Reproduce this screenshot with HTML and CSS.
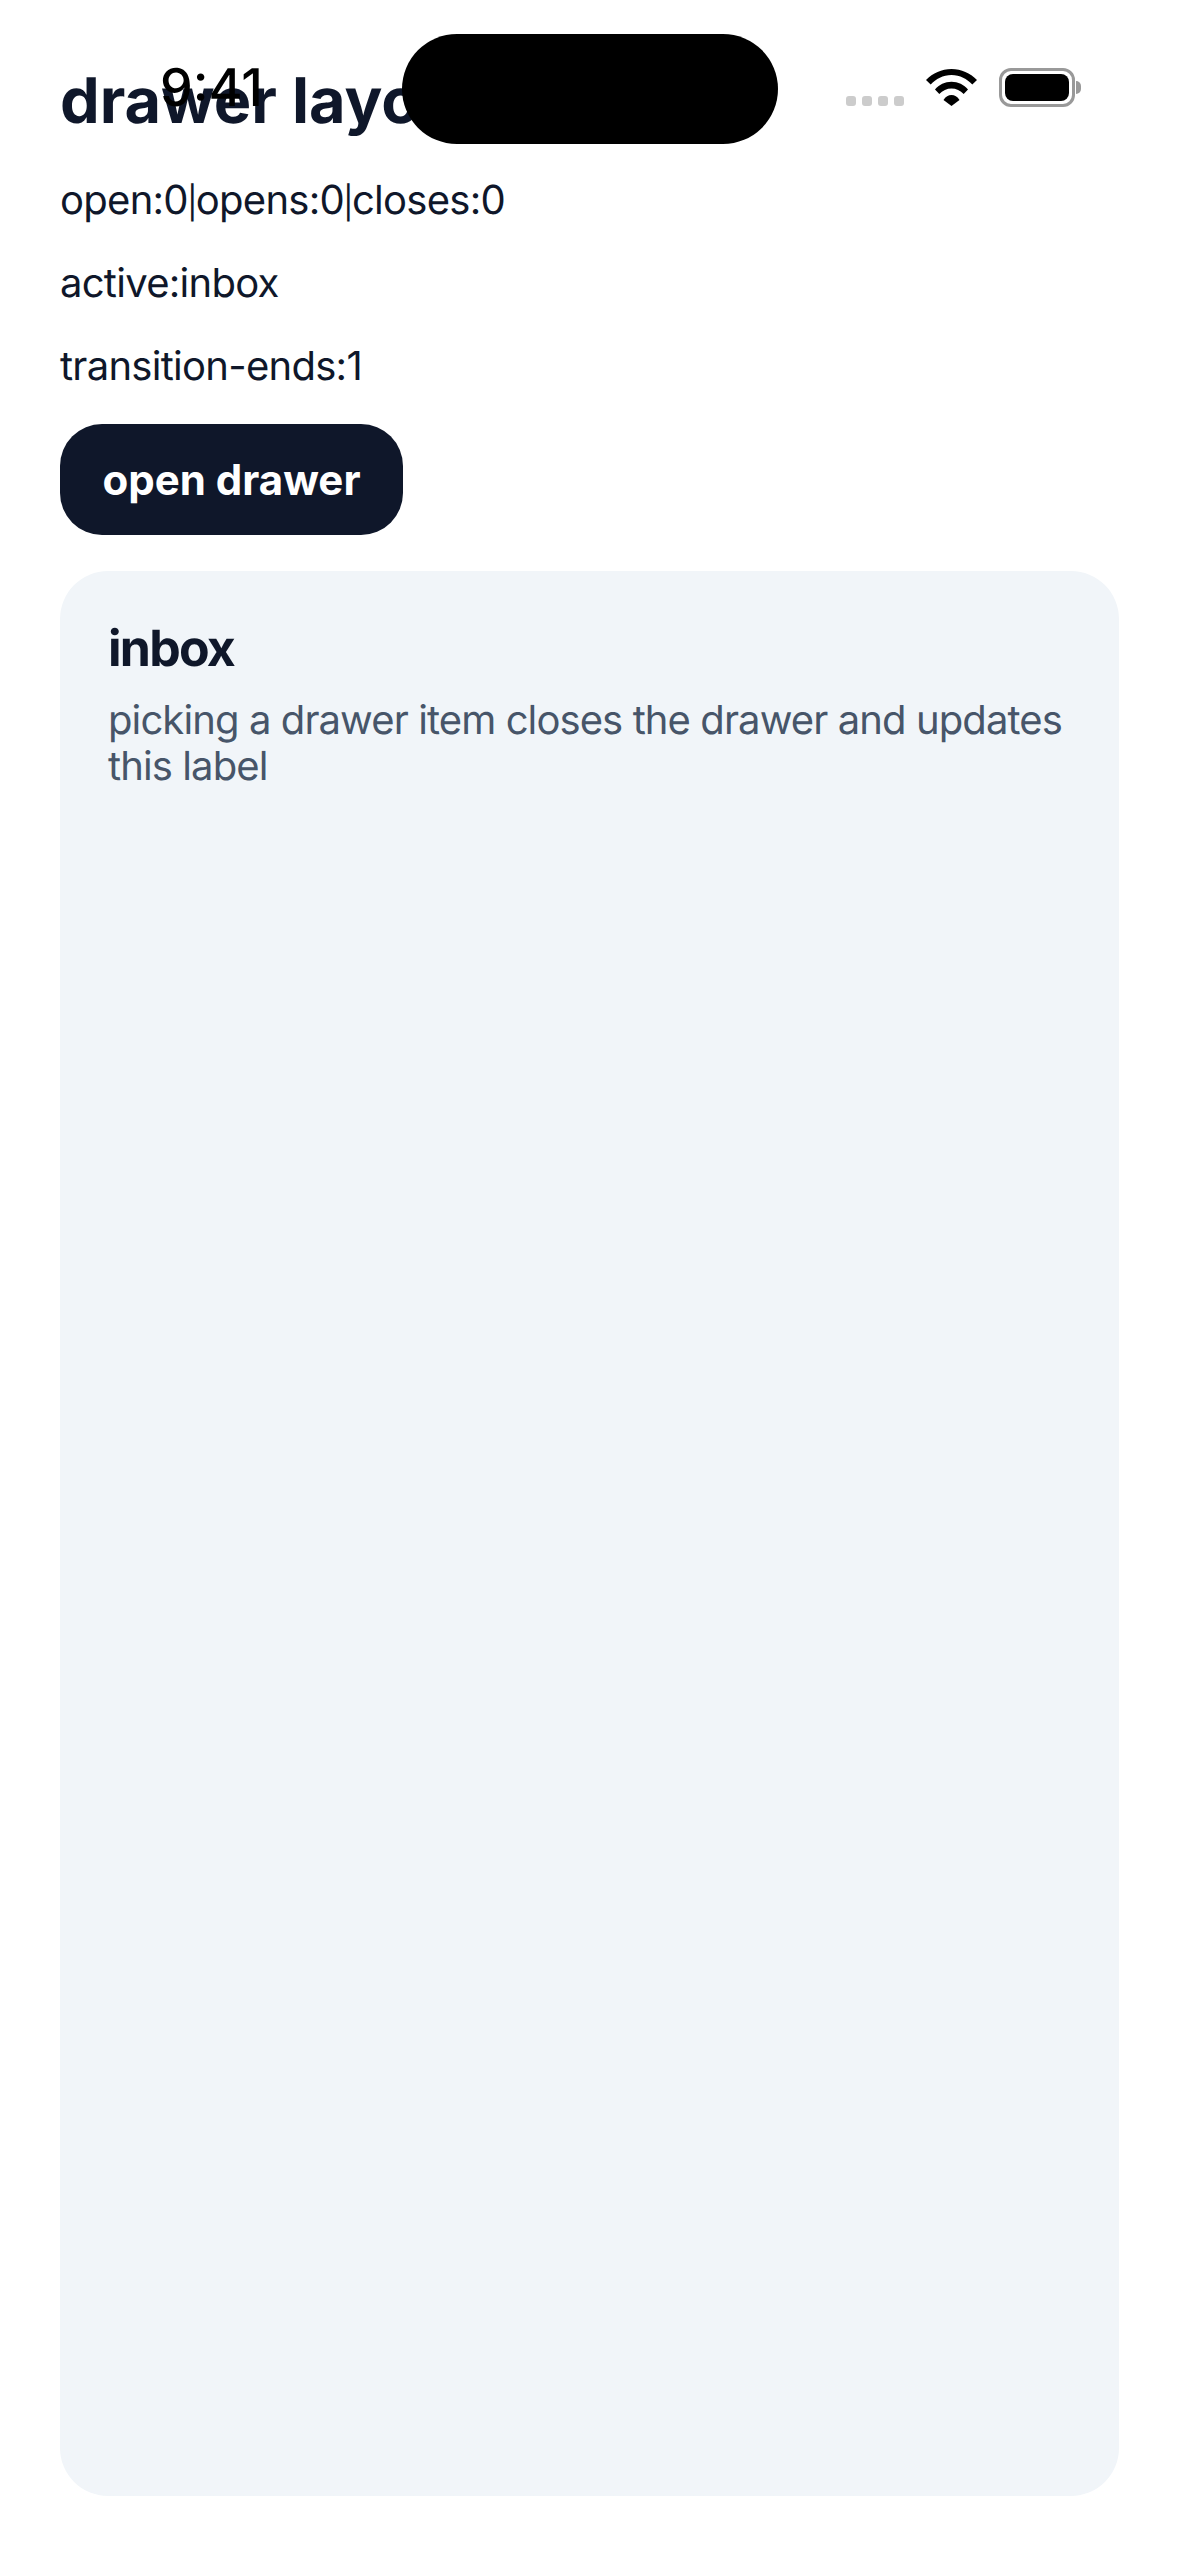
FILE: index.html
```html
<!DOCTYPE html>
<html lang="en">
<head>
    <meta charset="UTF-8">
    <meta name="viewport" content="width=device-width, initial-scale=1.0">
    <title>drawer layout</title>
    <link rel="stylesheet" href="styles.css">
</head>
<body>
    <div class="statusbar">
        <span class="time">9:41</span>
        <div class="island"></div>
        <div class="signal"><i></i><i></i><i></i><i></i></div>
        <svg class="wifi" viewBox="0 0 51 37" width="51" height="37">
            <path d="M0 11C7 4 15.500 0 25.500 0S44 4 51 11L46.300 15.500C41 10 34 6 25.500 6S10 10 4.700 15.500Z"/>
            <path d="M9 20.500C13 15.500 19 12.700 25.500 12.700S38 15.500 42 20.500L37.700 25C34.500 21.500 30 19.500 25.500 19.500S16.500 21.500 13.300 25Z"/>
            <path d="M17.500 31C19.500 27.500 22.500 26 25.500 26S31.500 27.500 33.500 31L25.500 37Z"/>
        </svg>
        <div class="battery"><div class="battery-level"></div></div>
        <div class="battery-nub"></div>
    </div>
    <div class="page">
        <h1>drawer layout</h1>
        <p class="stat">open:0<span class="sep">|</span>opens:0<span class="sep">|</span>closes:0</p>
        <p class="stat">active:inbox</p>
        <p class="stat">transition-ends:1</p>
        <button type="button" class="open-btn">open drawer</button>
        <section class="panel">
            <h2>inbox</h2>
            <p>picking a drawer item closes the drawer and updates this label</p>
        </section>
    </div>
</body>
</html>
```

FILE: styles.css
```css
html, body {
    margin: 0;
    padding: 0;
}
body {
    position: relative;
    width: 1179px;
    height: 2556px;
    background-color: #fff;
    font-family: Inter, "Noto Sans", sans-serif;
    color: #0f172a;
    overflow: hidden;
    text-rendering: geometricPrecision;
}
.statusbar {
    position: absolute;
    top: 0;
    left: 0;
    width: 1179px;
    height: 170px;
}
.time {
    position: absolute;
    left: 160px;
    top: 58px;
    font-size: 52px;
    line-height: 60px;
    font-weight: 500;
    color: #000;
}
.island {
    position: absolute;
    left: 402px;
    top: 34px;
    width: 376px;
    height: 110px;
    border-radius: 55px;
    background-color: #000;
}
.signal {
    position: absolute;
    left: 846px;
    top: 96px;
    display: flex;
    gap: 6px;
}
.signal i {
    width: 10px;
    height: 10px;
    border-radius: 3px;
    background-color: #ccc;
}
.wifi {
    position: absolute;
    left: 926px;
    top: 69px;
}
.battery {
    position: absolute;
    left: 999px;
    top: 68px;
    width: 76px;
    height: 39px;
    box-sizing: border-box;
    padding: 3px;
    border: 3px solid #999;
    border-radius: 12px;
}
.battery-level {
    height: 100%;
    border-radius: 8px;
    background-color: #000;
}
.battery-nub {
    position: absolute;
    left: 1076px;
    top: 81px;
    width: 5px;
    height: 13px;
    border-radius: 0 6px 6px 0;
    background-color: #999;
}
.page {
    box-sizing: border-box;
    height: 2556px;
    padding: 59px 60px 60px;
    display: flex;
    flex-direction: column;
}
h1 {
    margin: 0;
    font-size: 63px;
    line-height: 84px;
    font-weight: 700;
}
.stat {
    margin: 32px 0 0;
    font-size: 40px;
    line-height: 51px;
    letter-spacing: -0.018em;
}
h1 + .stat {
    margin-top: 31px;
}
.sep {
    margin: 0 -1px;
    font-size: 32px;
    line-height: 0;
}
.open-btn {
    align-self: flex-start;
    margin-top: 33px;
    width: 343px;
    height: 111px;
    padding: 0;
    border: none;
    border-radius: 42px;
    background-color: #0f172a;
    color: #fff;
    font-family: inherit;
    font-size: 42px;
    font-weight: 700;
}
.panel {
    flex: 1;
    margin-top: 36px;
    padding: 48px;
    border-radius: 48px;
    background-color: #f1f5f9;
}
.panel h2 {
    margin: 0;
    font-size: 50px;
    line-height: 60px;
    font-weight: 700;
    letter-spacing: -0.035em;
}
.panel p {
    margin: 18px 0 0;
    font-size: 40px;
    line-height: 46px;
    letter-spacing: -0.0225em;
    color: #475569;
}
```
